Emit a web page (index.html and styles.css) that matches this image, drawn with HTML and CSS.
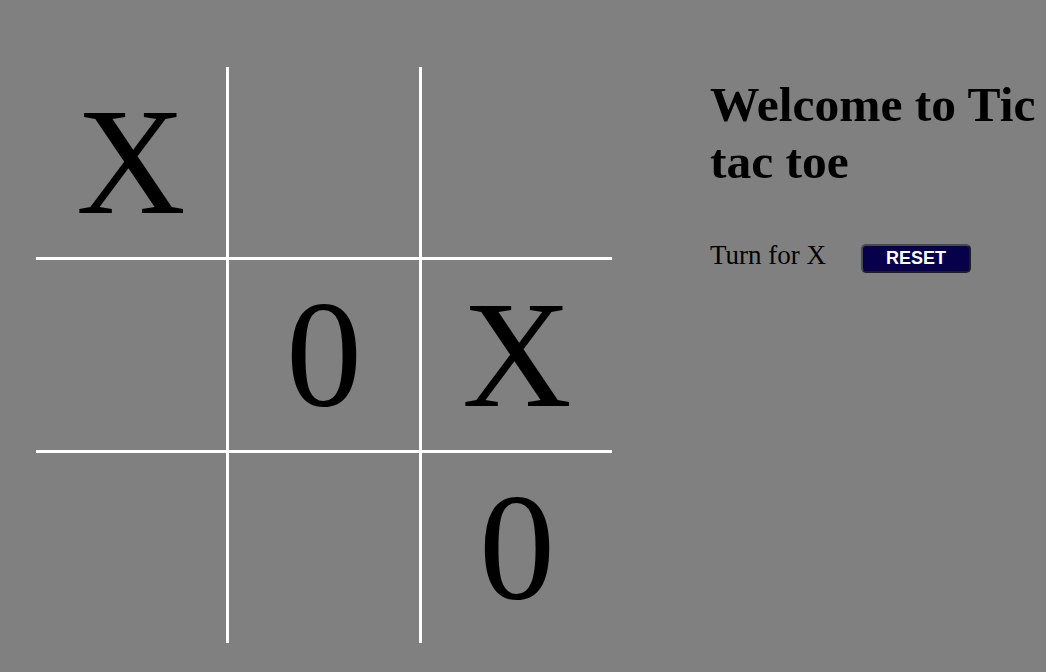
FILE: index.html
```html
<!DOCTYPE html>
<html>
<head>
<meta charset="utf-8">
<title>Tic tac toe</title>
<link rel="stylesheet" href="styles.css">
</head>
<body>
<div class="page">
  <div class="board">
    <div class="cell">X</div>
    <div class="cell"></div>
    <div class="cell"></div>
    <div class="cell"></div>
    <div class="cell">0</div>
    <div class="cell">X</div>
    <div class="cell"></div>
    <div class="cell"></div>
    <div class="cell">0</div>
  </div>
  <div class="info">
    <h1 class="title">Welcome to Tic tac toe</h1>
    <div class="status">
      <span class="turn">Turn for X</span>
      <button class="reset">RESET</button>
    </div>
  </div>
</div>
</body>
</html>
```
FILE: styles.css
```css
html, body {
  margin: 0;
  padding: 0;
  background: #808080;
}
body {
  font-family: "Liberation Serif", "Times New Roman", serif;
  color: #000;
}
.page {
  display: flex;
  align-items: flex-start;
  gap: 98px;
  padding: 67px 0 0 36px;
}
.board {
  display: grid;
  grid-template-columns: repeat(3, 190px);
  grid-template-rows: repeat(3, 190px);
  gap: 3px;
  background: #ffffff;
  flex: none;
}
.cell {
  background: #808080;
  display: flex;
  align-items: center;
  justify-content: center;
  font-size: 152px;
  line-height: 1;
}
.info {
  flex: 1;
  min-width: 0;
}
.title {
  font-size: 49.5px;
  font-weight: bold;
  line-height: 57px;
  margin: 9px 0 50px 0;
}
.status {
  display: flex;
  align-items: baseline;
  gap: 35px;
}
.turn {
  font-size: 27px;
}
.reset {
  box-sizing: border-box;
  width: 110px;
  height: 29px;
  padding: 0;
  background: #07004a;
  color: #ffffff;
  font-family: "Liberation Sans", Arial, sans-serif;
  font-weight: bold;
  font-size: 18px;
  border: 2px solid;
  border-color: #4a4a4a #1e1e1e #1e1e1e #4a4a4a;
  border-radius: 5px;
}
```
